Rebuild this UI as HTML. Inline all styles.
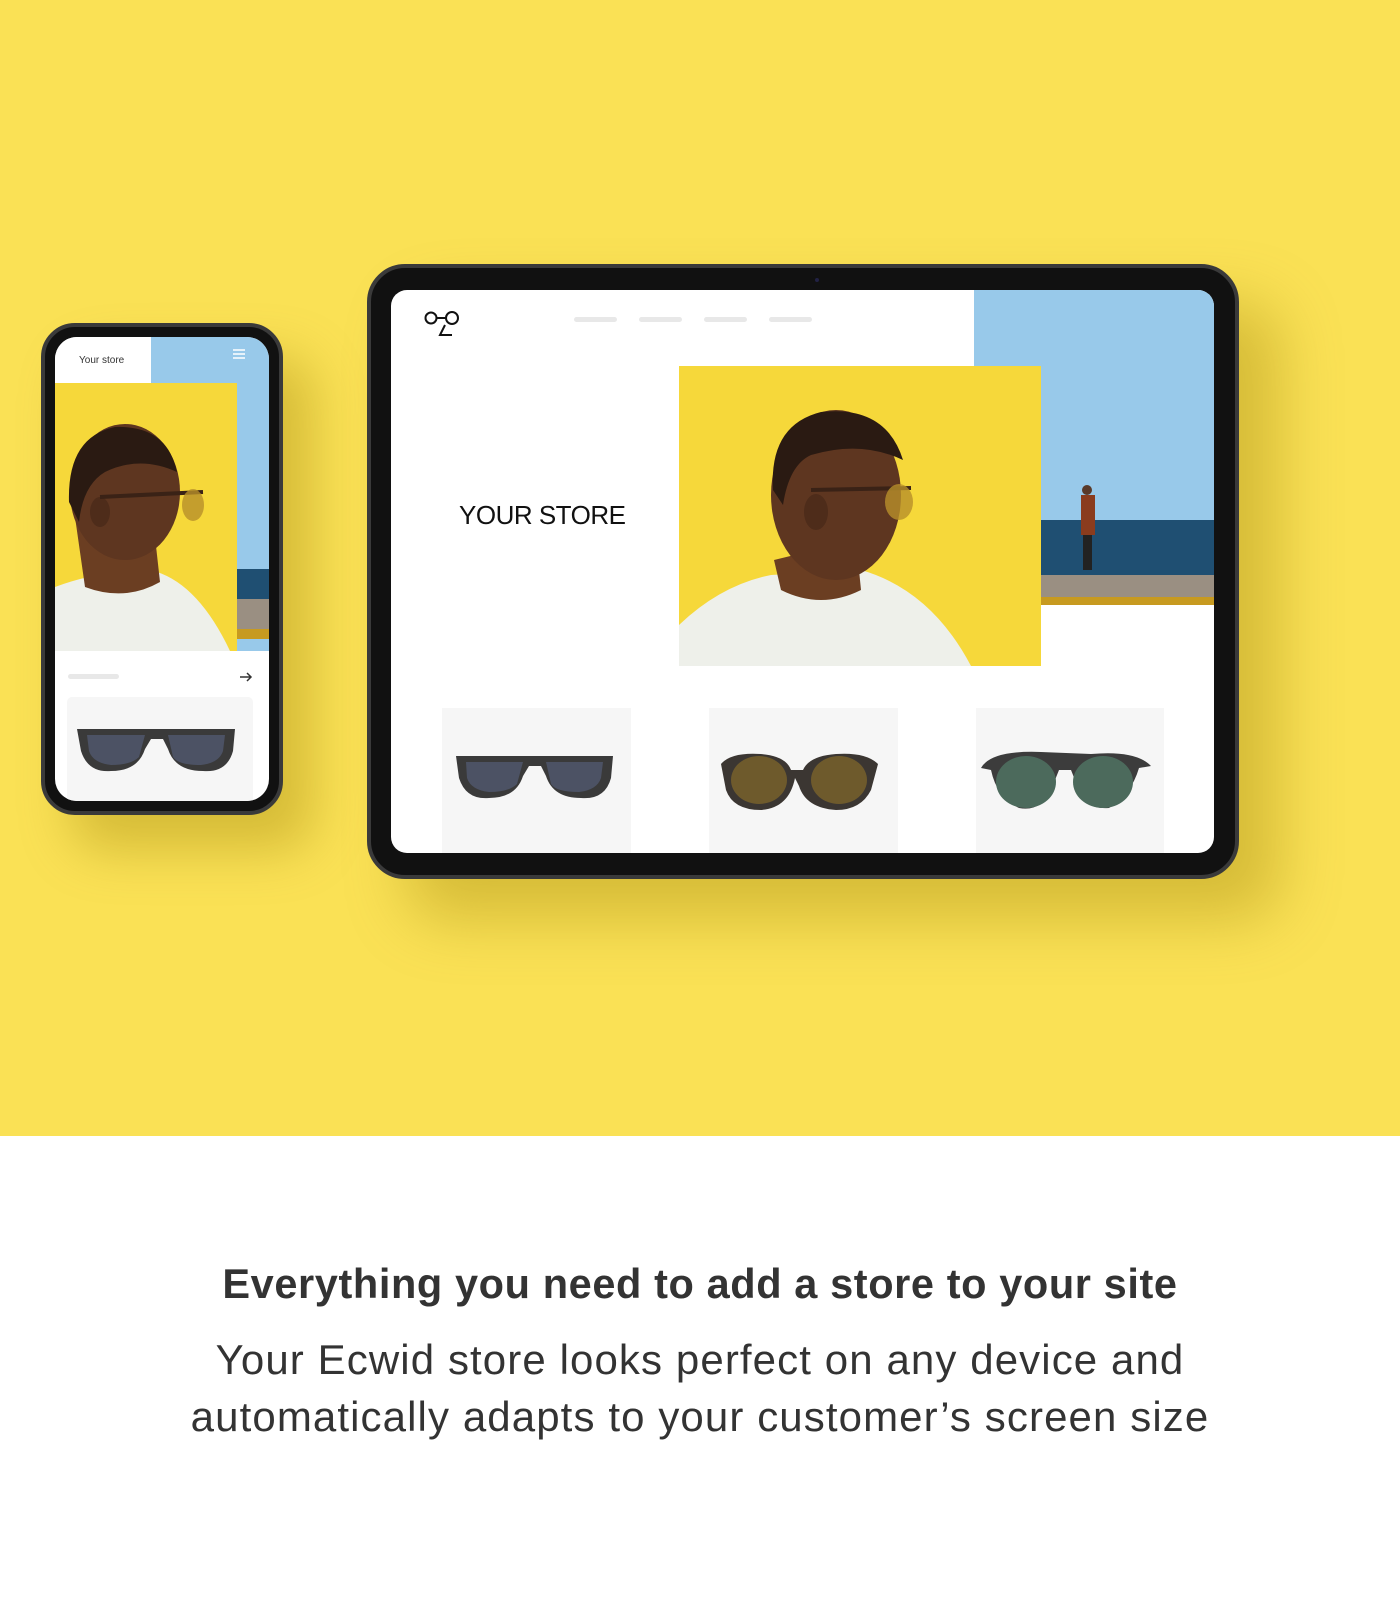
<!DOCTYPE html>
<html><head><meta charset="utf-8"><style>
*{margin:0;padding:0;box-sizing:border-box}
body{width:1400px;height:1600px;background:#fff;font-family:"Liberation Sans",sans-serif;position:relative;overflow:hidden}
.y{position:absolute;left:0;top:0;width:1400px;height:1136px;background:#fae155}
.abs{position:absolute}
.h1{position:absolute;top:1260px;left:0;width:1400px;text-align:center;font-weight:bold;font-size:41.5px;color:#333;letter-spacing:0.6px}
.p{position:absolute;top:1331px;left:0;width:1400px;text-align:center;font-size:42px;line-height:57px;color:#333;letter-spacing:1.1px}
</style></head><body>
<div class="y"></div>

<!-- tablet -->
<div class="abs" style="left:367px;top:264px;width:872px;height:615px;border-radius:38px;background:#111;border:4px solid #3a3a3a;box-shadow:40px 40px 60px rgba(150,120,0,.35)"></div>
<div class="abs" style="left:815px;top:278px;width:4px;height:4px;border-radius:2px;background:#224"></div>
<div class="abs" style="left:391px;top:290px;width:823px;height:563px;border-radius:16px;background:#fff;overflow:hidden">
  <svg class="abs" style="left:0;top:0" width="823" height="563">
    <g fill="none" stroke="#111" stroke-width="2"><circle cx="40" cy="28" r="5.5"/><circle cx="61" cy="28" r="6"/><path d="M46 28H55M54 35L49 45H61"/></g>
    <g fill="#e8e8e8"><rect x="183" y="27" width="43" height="5" rx="2.5"/><rect x="248" y="27" width="43" height="5" rx="2.5"/><rect x="313" y="27" width="43" height="5" rx="2.5"/><rect x="378" y="27" width="43" height="5" rx="2.5"/></g>
    <rect x="583" y="0" width="240" height="315" fill="#98c9ea"/>
    <rect x="583" y="230" width="240" height="58" fill="#1f4f72"/>
    <rect x="583" y="285" width="240" height="22" fill="#9a8f82"/>
    <rect x="583" y="307" width="240" height="8" fill="#c79a20"/>
    <rect x="690" y="205" width="14" height="40" fill="#8a3c1e"/><rect x="692" y="245" width="9" height="35" fill="#222"/><circle cx="696" cy="200" r="5" fill="#5a3a2a"/>
    <rect x="288" y="76" width="362" height="300" fill="#f6d83a"/>
    <path d="M288 335 Q330 295 380 285 L470 280 Q540 300 580 376 L288 376Z" fill="#eef0ea"/>
    <path d="M383 270 L390 300 Q430 320 470 300 L465 250Z" fill="#6b3e22"/>
    <ellipse cx="445" cy="205" rx="65" ry="85" fill="#5e3620"/>
    <path d="M382 200 Q378 135 430 122 Q495 115 512 170 Q470 150 420 165 Q398 175 392 215Z" fill="#2a1a12"/>
    <ellipse cx="425" cy="222" rx="12" ry="18" fill="#4e2c1a"/>
    <path d="M420 200 L520 198" stroke="#3a2216" stroke-width="4"/>
    <ellipse cx="508" cy="212" rx="14" ry="18" fill="#b8902a" opacity=".8"/>
  </svg>
  <div class="abs" style="left:68px;top:210px;font-size:26px;color:#111;letter-spacing:-0.5px">YOUR STORE</div>
  <div class="abs" style="left:51px;top:418px;width:189px;height:150px;background:#f6f6f6"></div>
  <div class="abs" style="left:318px;top:418px;width:189px;height:150px;background:#f6f6f6"></div>
  <div class="abs" style="left:585px;top:418px;width:188px;height:150px;background:#f6f6f6"></div>
  <svg class="abs" style="left:0;top:0" width="823" height="563">
    <path d="M65 466 H222 L220 488 Q214 510 190 508 Q162 508 155 486 L150 476 L138 476 L132 486 Q125 508 98 508 Q75 510 68 488Z" fill="#3a3a3a"/>
    <path d="M75 472 H132 L126 494 Q118 502 98 502 Q80 500 76 488Z M155 472 H212 L210 488 Q206 500 188 502 Q165 502 160 494Z" fill="#4c5264"/>
    <path d="M330 474 Q340 462 370 464 Q395 466 400 480 L412 480 Q418 466 445 464 Q475 462 487 474 L480 500 Q470 520 445 520 Q415 518 408 496 L404 488 Q398 518 370 520 Q342 520 335 500Z" fill="#3b3632"/>
    <ellipse cx="368" cy="490" rx="28" ry="24" fill="#6e5a2c"/><ellipse cx="448" cy="490" rx="28" ry="24" fill="#6e5a2c"/>
    <path d="M590 478 Q600 460 650 462 L700 464 Q745 460 760 476 L748 478 Q740 505 718 518 Q695 520 688 500 L680 480 H668 L660 500 Q650 522 628 518 Q606 508 600 480Z" fill="#3c3c3c"/>
    <ellipse cx="635" cy="492" rx="30" ry="26" fill="#4c6a5c"/><ellipse cx="712" cy="492" rx="30" ry="26" fill="#4c6a5c"/>
  </svg>
</div>

<!-- phone -->
<div class="abs" style="left:41px;top:323px;width:242px;height:492px;border-radius:34px;background:#111;border:4px solid #3a3a3a;box-shadow:30px 35px 50px rgba(150,120,0,.35)"></div>
<div class="abs" style="left:55px;top:337px;width:214px;height:464px;border-radius:22px;background:#fff;overflow:hidden">
  <svg class="abs" style="left:0;top:0" width="214" height="464">
    <rect x="96" y="0" width="118" height="314" fill="#98c9ea"/>
    <rect x="182" y="232" width="32" height="30" fill="#1f4f72"/>
    <rect x="182" y="262" width="32" height="30" fill="#9a8f82"/>
    <rect x="182" y="292" width="32" height="10" fill="#c79a20"/>
    <rect x="0" y="46" width="182" height="268" fill="#f6d83a"/>
    <path d="M0 250 Q40 235 90 232 Q140 240 175 314 L0 314Z" fill="#eef0ea"/>
    <path d="M20 180 L30 250 Q70 265 105 245 L100 200Z" fill="#6b3e22"/>
    <ellipse cx="70" cy="155" rx="55" ry="68" fill="#5e3620"/>
    <path d="M14 165 Q12 100 60 90 Q112 88 122 135 Q85 118 50 135 Q28 148 24 185Z" fill="#2a1a12"/>
    <ellipse cx="45" cy="175" rx="10" ry="15" fill="#4e2c1a"/>
    <path d="M45 160 L148 155" stroke="#3a2216" stroke-width="4"/>
    <ellipse cx="138" cy="168" rx="11" ry="16" fill="#b8902a" opacity=".8"/>
    <rect x="0" y="0" width="96" height="46" fill="#fff"/>
    <g stroke="#fff" stroke-width="1.5"><path d="M178 13H190M178 17H190M178 21H190"/></g>
    <rect x="13" y="337" width="51" height="5" rx="2.5" fill="#e8e8e8"/>
    <path d="M185 340H196M192 336L196 340L192 344" stroke="#333" stroke-width="1.5" fill="none"/>
    <rect x="12" y="360" width="186" height="110" rx="5" fill="#f6f6f6"/>
    <path d="M22 392 H180 L178 414 Q172 436 148 434 Q120 434 113 412 L108 402 L96 402 L90 412 Q83 434 56 434 Q33 436 26 414Z" fill="#3a3a3a"/>
    <path d="M32 398 H90 L84 420 Q76 428 56 428 Q38 426 34 414Z M113 398 H170 L168 414 Q164 426 146 428 Q123 428 118 420Z" fill="#4c5264"/>
  </svg>
  <div class="abs" style="left:24px;top:18px;font-size:10px;color:#333">Your store</div>
</div>

<div class="h1">Everything you need to add a store to your site</div>
<div class="p">Your Ecwid store looks perfect on any device and<br>automatically adapts to your customer’s screen size</div>
</body></html>
